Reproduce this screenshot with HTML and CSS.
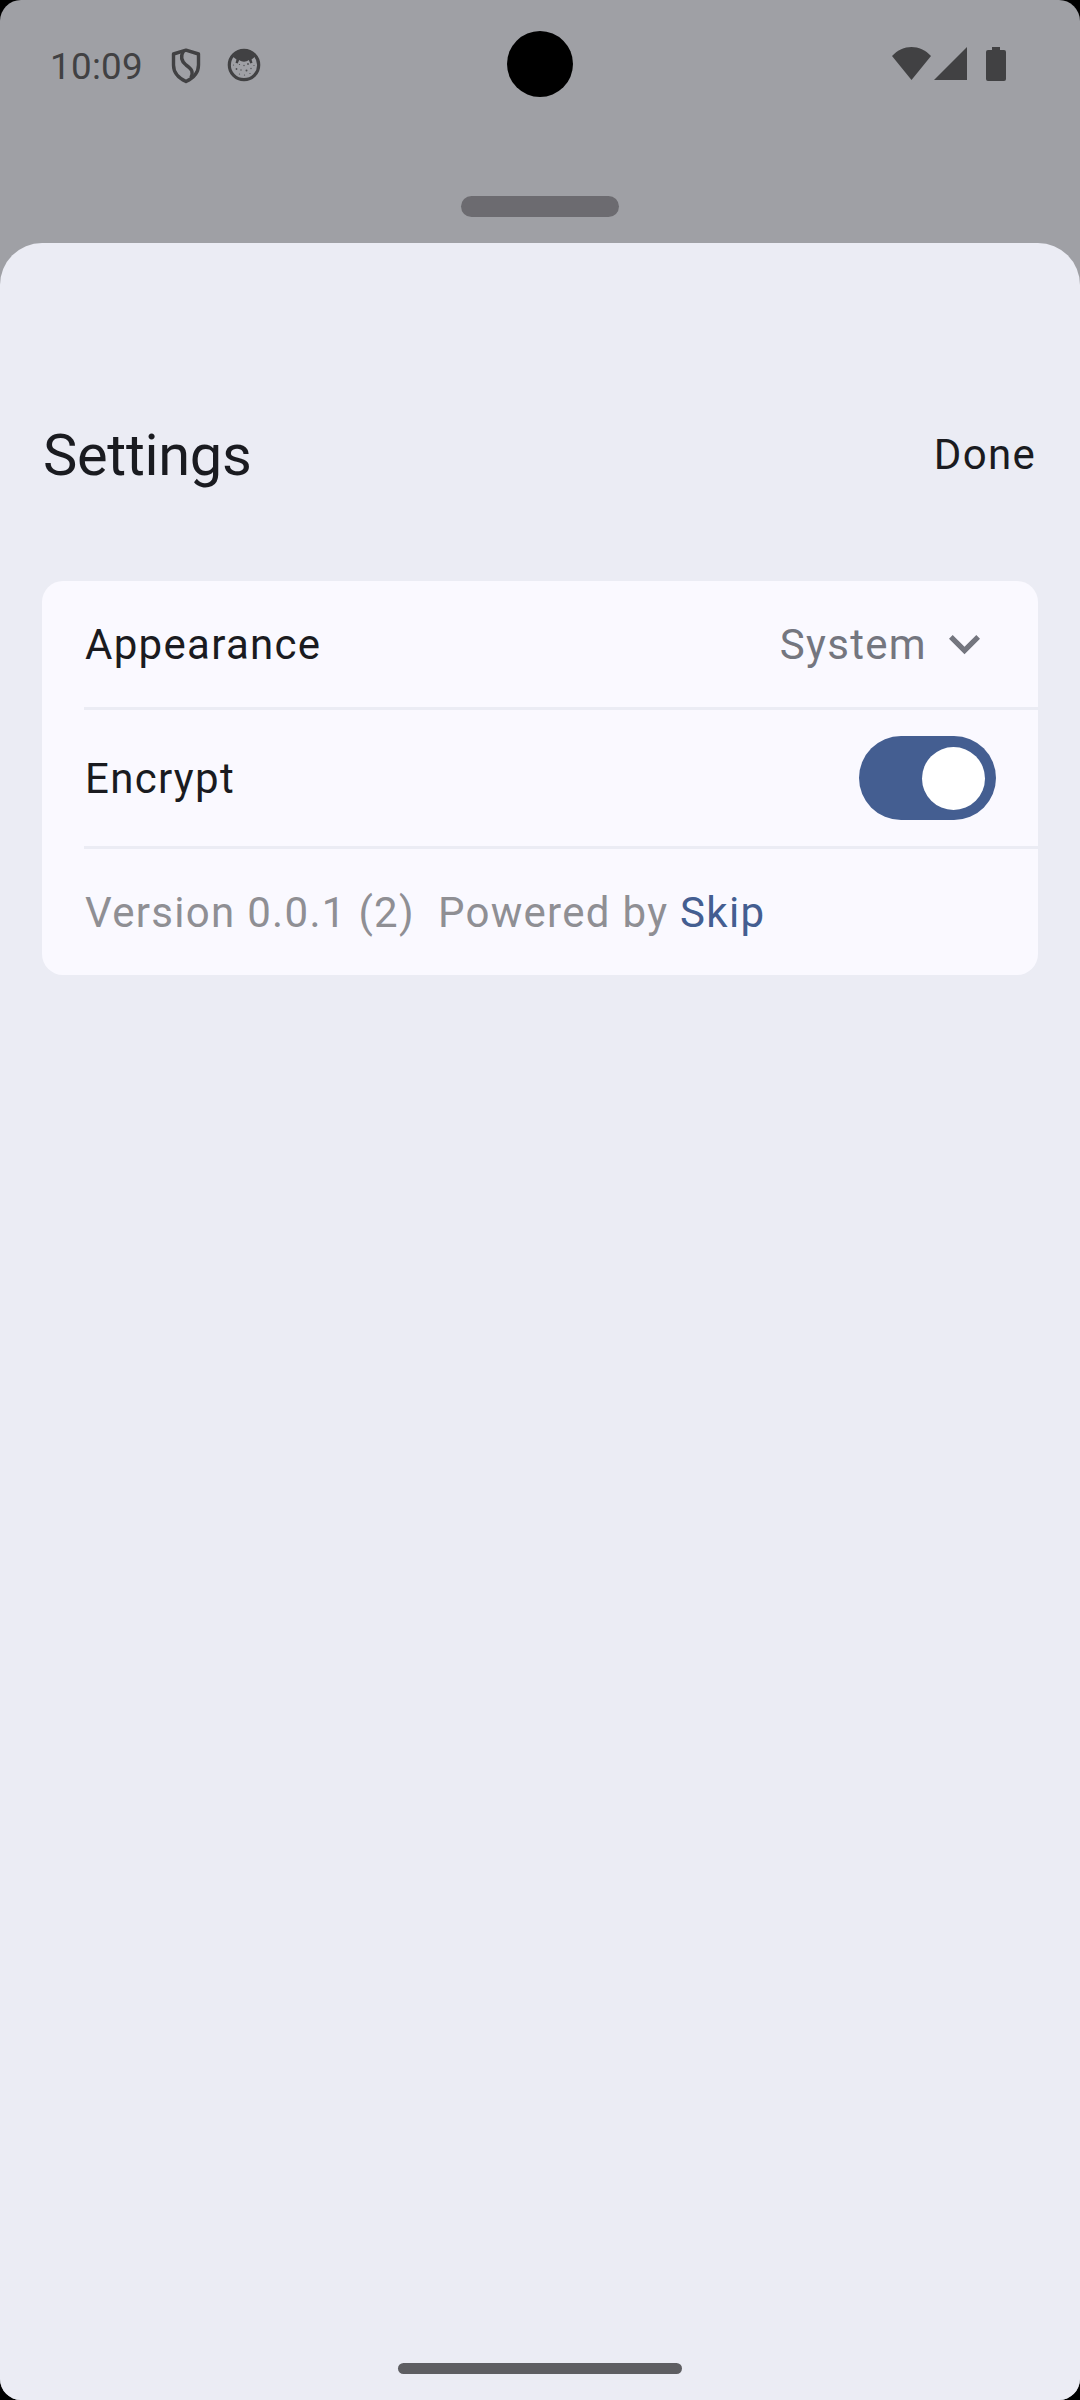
FILE: index.html
```html
<!DOCTYPE html>
<html lang="en">
<head>
<meta charset="utf-8">
<title>Settings</title>
<link rel="stylesheet" href="styles.css">
</head>
<body>
<div class="screen">
  <header class="status-bar">
    <div class="status-left">
      <span class="clock">10:09</span>
      <svg class="shield" width="30" height="36" viewBox="0 0 30 36" fill="none" stroke="#414143" stroke-width="3.400" stroke-linejoin="round">
        <path d="M15 2.200 27.500 6v11c0 7.500-5 13-12.500 16.500C7.500 30 2.500 24.500 2.500 17V6z"/>
        <path d="M12.500 3C9.500 8 9.500 12.500 15 17c6 4.300 7.500 6.500 5 12.500"/>
      </svg>
      <svg class="face" width="34" height="34" viewBox="0 0 34 34" fill="#414143">
        <circle cx="17" cy="17" r="14.700" fill="none" stroke="#414143" stroke-width="3.200"/>
        <path d="M5 8C10-1 24-1 29 8l-4.500 3.500 1 3.300-2.200.7-1.500-3.500c-3 2.300-6.600 2.300-9.600 0L10.700 15.500l-2.200-.7 1-3.300z"/>
        <g opacity=".85">
          <circle cx="12.500" cy="16.500" r=".6"/><circle cx="17" cy="17.500" r=".7"/><circle cx="21" cy="16" r=".9"/>
          <circle cx="9.500" cy="21" r=".9"/><circle cx="14" cy="22" r=".7"/><circle cx="19.500" cy="22.500" r="1"/>
          <circle cx="24" cy="20.500" r=".7"/><circle cx="6.500" cy="17" r=".6"/><circle cx="12.500" cy="26" r=".6"/>
          <circle cx="17.500" cy="27" r=".6"/><circle cx="23" cy="25.500" r=".6"/><circle cx="27" cy="17.500" r=".6"/>
        </g>
      </svg>
    </div>
    <div class="camera"></div>
    <div class="status-right">
      <svg class="wifi" width="39" height="33" viewBox="0 0 39 33" fill="#414143"><path d="M0 9C11-3 28-3 39 9L19.500 33z"/></svg>
      <svg class="signal" width="33" height="33" viewBox="0 0 33 33" fill="#414143"><path d="M33 0v33H0z"/></svg>
      <svg class="battery" width="20" height="34" viewBox="0 0 20 34" fill="#414143"><path d="M6 0h8v3h4q2 0 2 2v27q0 2-2 2H2q-2 0-2-2V5q0-2 2-2h4z"/></svg>
    </div>
  </header>
  <div class="handle"></div>
  <main class="sheet">
    <div class="title-bar">
      <h1 class="title">Settings</h1>
      <span class="done">Done</span>
    </div>
    <section class="card">
      <div class="row">
        <span>Appearance</span>
        <span class="picker">System
          <svg class="chevron" width="31" height="20" viewBox="0 0 31 20" fill="#74767f"><path d="M3.700 0 15.500 11.800 27.300 0 31 3.700 15.500 19.200 0 3.700z"/></svg>
        </span>
      </div>
      <div class="divider"></div>
      <div class="row row-tall">
        <span>Encrypt</span>
        <span class="toggle"><span class="knob"></span></span>
      </div>
      <div class="divider"></div>
      <div class="row about">
        <span class="version">Version 0.0.1 (2)</span>
        <span class="powered">Powered by <span class="link">Skip</span></span>
      </div>
    </section>
    <div class="home-bar"></div>
  </main>
</div>
</body>
</html>
```
FILE: styles.css
```css
* { box-sizing: border-box; }
body {
  margin: 0;
  background: #000;
  font-family: Roboto, sans-serif;
  font-size: 42px;
  letter-spacing: 1.3px;
  color: #1a1b20;
}
svg { display: block; flex: none; }
.screen {
  width: 1080px;
  height: 2400px;
  display: flex;
  flex-direction: column;
  background: #9fa0a5;
  border-radius: 21px;
  overflow: hidden;
}
.status-bar {
  height: 128px;
  display: grid;
  grid-template-columns: 1fr 66px 1fr;
  align-items: center;
}
.status-left, .status-right { display: flex; align-items: center; }
.status-left { padding-left: 50px; }
.clock {
  width: 121px;
  font-size: 36.75px;
  letter-spacing: 0.3px;
  color: #414143;
  padding-top: 4px;
}
.shield { margin-top: 3px; }
.face { margin: 2px 0 0 26px; }
.camera { width: 66px; height: 66px; border-radius: 50%; background: #000; }
.status-right { justify-content: flex-end; padding: 0 74px 1px 0; }
.signal { margin-left: 3px; }
.battery { margin: 1px 0 0 19px; }
.handle {
  width: 158px;
  height: 21px;
  margin: 68px auto 26px;
  border-radius: 10.5px;
  background: #6c6b70;
}
.sheet {
  flex: 1;
  display: flex;
  flex-direction: column;
  padding: 127px 42px 26px;
  background: #ebecf4;
  border-radius: 42px 42px 0 0;
}
.title-bar {
  height: 168px;
  display: flex;
  align-items: center;
  justify-content: space-between;
}
.title {
  margin: 0;
  padding: 2px 0 0 1px;
  font-size: 57.75px;
  font-weight: 400;
  letter-spacing: -0.3px;
}
.done { padding-right: 2px; }
.card {
  margin-top: 43px;
  background: #faf9ff;
  border-radius: 21px;
  overflow: hidden;
}
.row {
  height: 126px;
  padding: 0 42px 0 43px;
  display: flex;
  align-items: center;
  justify-content: space-between;
}
.row-tall { height: 136px; }
.divider { height: 3px; margin-left: 42px; background: #ebecf4; }
.picker { display: flex; align-items: center; color: #74767f; }
.chevron { margin: 2px 16px 0 22px; }
.toggle {
  width: 137px;
  height: 84px;
  padding-right: 11px;
  display: flex;
  align-items: center;
  justify-content: flex-end;
  border-radius: 42px;
  background: #445e91;
}
.knob { width: 63px; height: 63px; border-radius: 50%; background: #fff; }
.about { justify-content: flex-start; gap: 23px; color: #8f8f94; }
.link { color: #445e91; }
.home-bar {
  width: 284px;
  height: 11px;
  margin: auto auto 0;
  border-radius: 5.5px;
  background: #5e5e62;
}
```
